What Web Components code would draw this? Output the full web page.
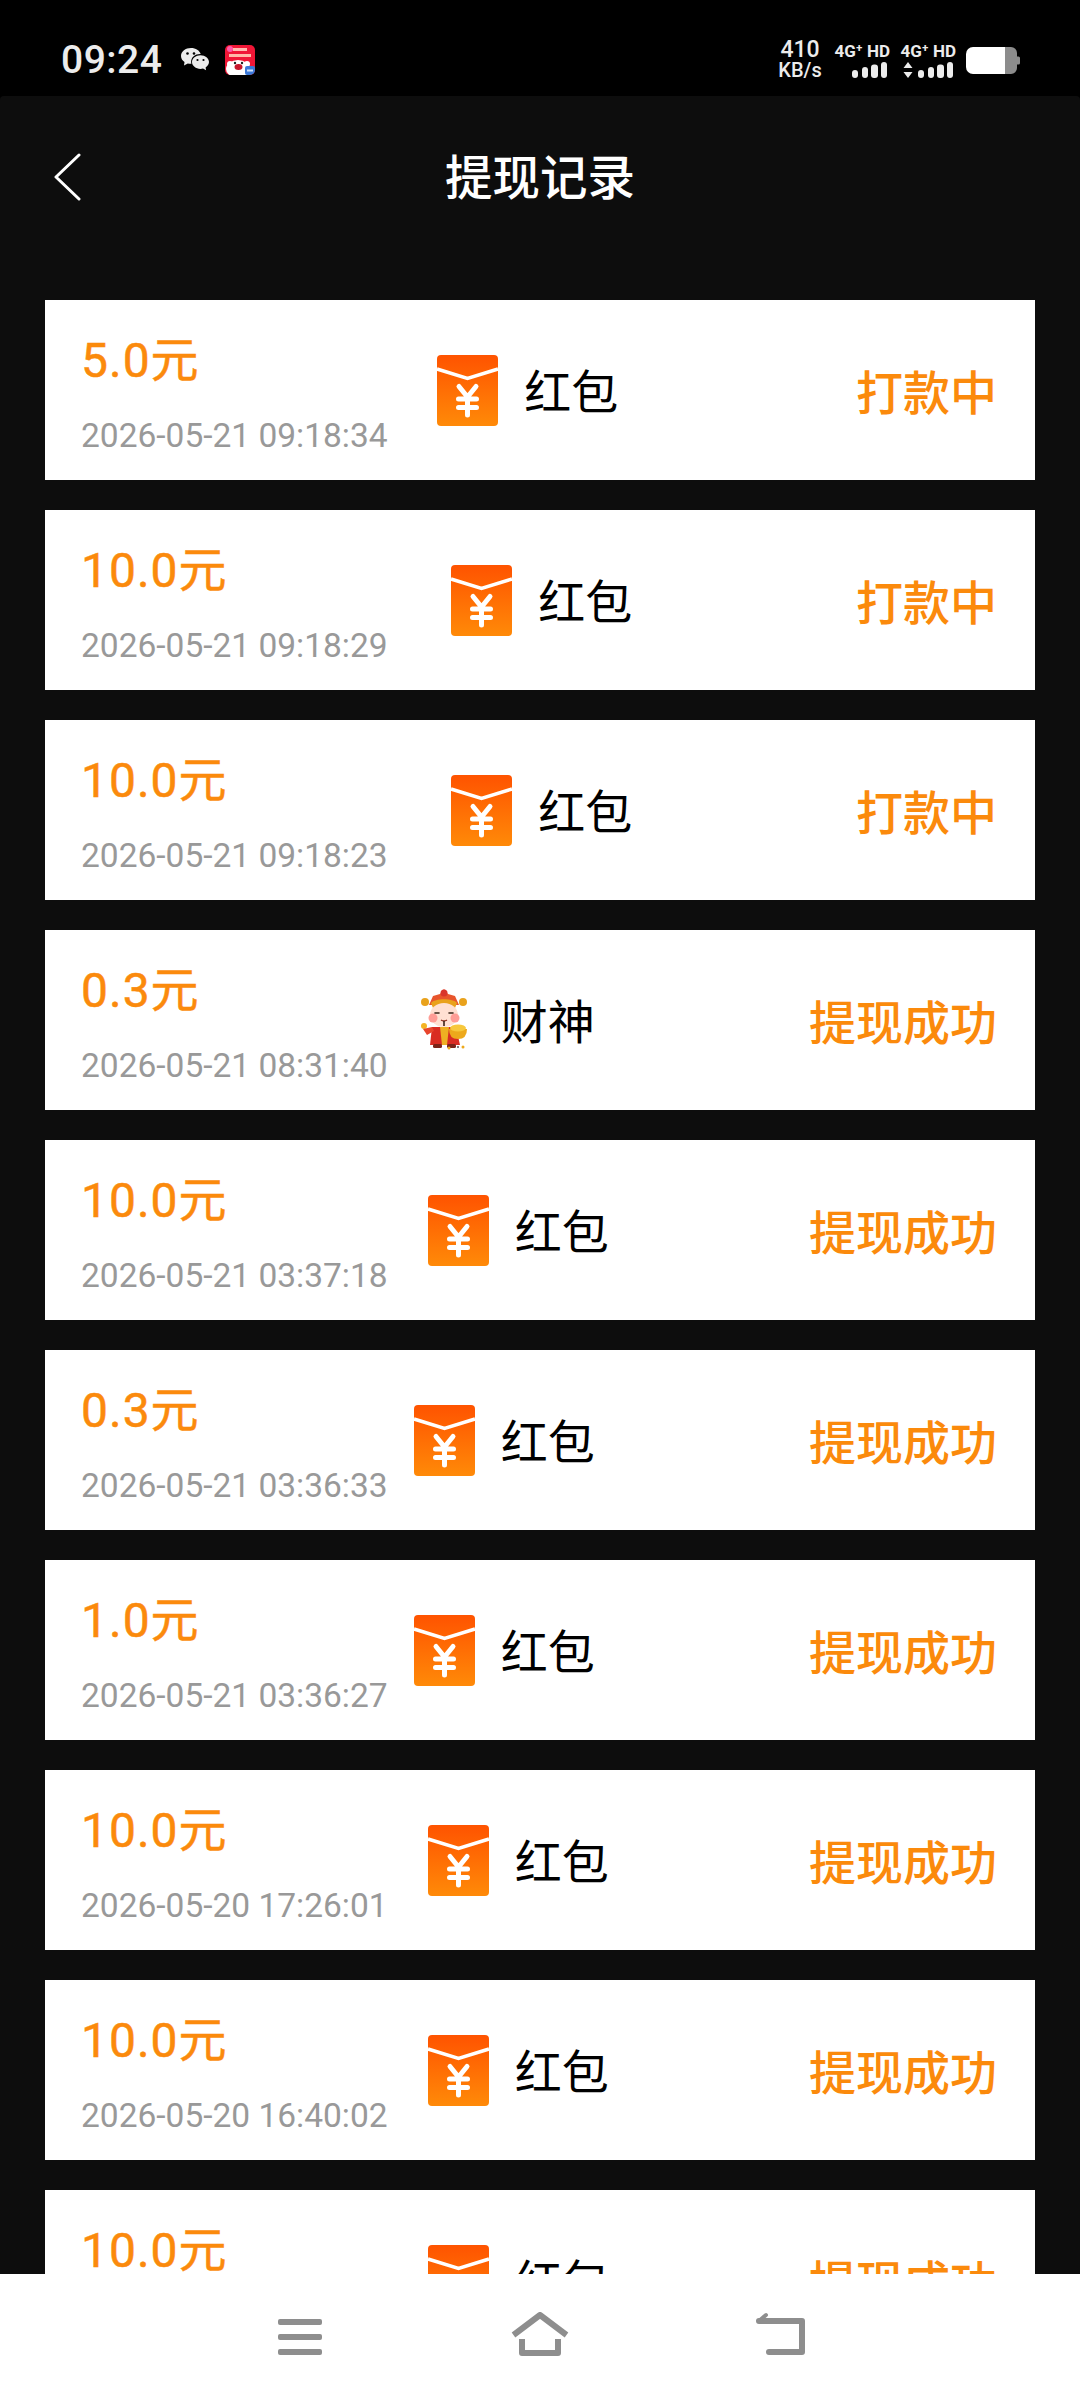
<!DOCTYPE html>
<html lang="zh">
<head>
<meta charset="utf-8">
<title>提现记录</title>
<style>
  html, body { margin: 0; padding: 0; background: #000; }
  body { width: 1080px; height: 2400px; overflow: hidden; font-family: Roboto, "Noto Sans CJK SC", sans-serif; }
</style>
</head>
<body>
<withdraw-page>
  <withdraw-record amount="5.0元" date="2026-05-21 09:18:34" status="打款中">红包</withdraw-record>
  <withdraw-record amount="10.0元" date="2026-05-21 09:18:29" status="打款中">红包</withdraw-record>
  <withdraw-record amount="10.0元" date="2026-05-21 09:18:23" status="打款中">红包</withdraw-record>
  <withdraw-record amount="0.3元" date="2026-05-21 08:31:40" status="提现成功" icon="god">财神</withdraw-record>
  <withdraw-record amount="10.0元" date="2026-05-21 03:37:18" status="提现成功">红包</withdraw-record>
  <withdraw-record amount="0.3元" date="2026-05-21 03:36:33" status="提现成功">红包</withdraw-record>
  <withdraw-record amount="1.0元" date="2026-05-21 03:36:27" status="提现成功">红包</withdraw-record>
  <withdraw-record amount="10.0元" date="2026-05-20 17:26:01" status="提现成功">红包</withdraw-record>
  <withdraw-record amount="10.0元" date="2026-05-20 16:40:02" status="提现成功">红包</withdraw-record>
  <withdraw-record amount="10.0元" date="2026-05-20 16:39:55" status="提现成功">红包</withdraw-record>
</withdraw-page>

<script>
class StatusBar extends HTMLElement {
  constructor() {
    super();
    this.shadowDOM = this.attachShadow({ mode: "open" });
    const bars = `
      <rect x="0" y="8" width="6" height="8" rx="3"/>
      <rect x="10" y="5" width="6" height="11" rx="3"/>
      <rect x="19" y="2.5" width="7" height="13.5" rx="3"/>
      <rect x="29" y="0" width="6" height="16" rx="3"/>`;
    this.shadowDOM.innerHTML = `
    <style>
      :host {
        display: flex;
        align-items: center;
        justify-content: space-between;
        height: 96px;
        padding: 24px 60px 0 61px;
        box-sizing: border-box;
        background: #000;
        color: #ececec;
      }
      .left, .right { display: flex; align-items: center; }
      .time { font: 500 39px/44px Roboto, sans-serif; letter-spacing: 0.5px; margin-right: 19px; }
      .wechat { margin-right: 16px; }
      .speed {
        width: 46px;
        margin-right: 11px;
        font: 500 20px/20px Roboto, sans-serif;
        text-align: center;
        white-space: pre-line;
      }
      .speed::first-line { font-size: 23px; }
      .net {
        display: flex;
        flex-direction: column;
        align-items: flex-end;
        width: 56px;
        margin-right: 10px;
        font: 700 17px/16px Roboto, sans-serif;
        white-space: nowrap;
      }
      .net svg { display: block; margin-top: 3px; }
      .net .row { display: flex; align-items: flex-end; gap: 5px; margin-right: 3px; }
    </style>
    <div class="left">
      <span class="time">09:24</span>
      <svg class="wechat" width="28" height="24" viewBox="0 0 28 24">
        <path fill="#ececec" d="M10 0C4.5 0 0 3.5 0 8c0 2.5 1.4 4.6 3.5 6L3 17.5 6.8 15.4c1 .3 2 .4 3 .4h.6a7.5 7.5 0 0 1-.3-2c0-4.3 4-7.7 9-7.7h.6C18.700 2.500 14.700 0 10 0Z"/>
        <path fill="#ececec" d="M19.500 7.300c-4.700 0-8.500 3-8.500 6.800s3.800 6.800 8.500 6.800c.9 0 1.700-.1 2.500-.3l3.100 1.700-.5-2.900c2-1.300 3.400-3.200 3.400-5.300 0-3.800-3.800-6.800-8.500-6.800Z"/>
        <circle cx="6.500" cy="5.500" r="1.300" fill="#000"/><circle cx="13" cy="5.500" r="1.300" fill="#000"/>
        <circle cx="16.500" cy="12" r="1.100" fill="#000"/><circle cx="22.500" cy="12" r="1.100" fill="#000"/>
      </svg>
      <svg width="30" height="30" viewBox="0 0 30 30">
        <defs><clipPath id="round"><rect width="30" height="30" rx="5"/></clipPath></defs>
        <g clip-path="url(#round)">
          <rect width="30" height="30" fill="#f01636"/>
          <circle cx="5" cy="4" r="3" fill="#ff5aa8"/>
          <rect x="8" y="3" width="14" height="3" fill="#ffb9b0"/>
          <rect x="4" y="9" width="22" height="3" fill="#ffb9a8"/>
          <ellipse cx="13" cy="24" rx="12" ry="9" fill="#fff"/>
          <circle cx="5" cy="19" r="3" fill="#fff"/>
          <circle cx="22" cy="19" r="3" fill="#fff"/>
          <circle cx="10" cy="18" r="1.200" fill="#222"/>
          <circle cx="17" cy="18" r="1.200" fill="#222"/>
          <ellipse cx="13.500" cy="22" rx="4" ry="3" fill="#c8162c"/>
          <rect x="20" y="21" width="10" height="9" rx="2" fill="#3b79d8"/>
          <rect x="22" y="24.500" width="6" height="2" fill="#cfe0fa"/>
        </g>
      </svg>
    </div>
    <div class="right">
      <div class="speed">410
KB/s</div>
      <div class="net">
        <span>4G⁺ HD</span>
        <div class="row"><svg width="35" height="16" viewBox="0 0 35 16" fill="#ececec">${bars}</svg></div>
      </div>
      <div class="net">
        <span>4G⁺ HD</span>
        <div class="row">
          <svg width="10" height="16" viewBox="0 0 10 16" fill="#ececec"><path d="M5 0l4.500 6H.5zM5 16L.5 10h9z"/></svg>
          <svg width="35" height="16" viewBox="0 0 35 16" fill="#ececec">${bars}</svg>
        </div>
      </div>
      <svg width="54" height="27" viewBox="0 0 54 27">
        <path fill="#8c8c8c" d="M38 0h7a6 6 0 0 1 6 6v3.500h1.500a1.500 1.500 0 0 1 1.500 1.500v5a1.500 1.500 0 0 1-1.500 1.500H51V21a6 6 0 0 1-6 6h-7z"/>
        <path fill="#fff" d="M7 0h32v27H7a7 7 0 0 1-7-7V7a7 7 0 0 1 7-7z"/>
      </svg>
    </div>
    `;
  }
}

class TitleBar extends HTMLElement {
  constructor() {
    super();
    this.shadowDOM = this.attachShadow({ mode: "open" });
    this.shadowDOM.innerHTML = `
    <style>
      :host {
        display: grid;
        grid-template-columns: 200px 1fr 200px;
        align-items: center;
        height: 164px;
        flex: none;
        padding-left: 54px;
        box-sizing: border-box;
      }
      .back { display: block; margin-top: -2px; }
      h1 {
        margin: -6px 0 0 -54px;
        text-align: center;
        color: #fff;
        font: 500 47.500px/60px "Noto Sans CJK SC", sans-serif;
      }
    </style>
    <svg class="back" width="27" height="48" viewBox="0 0 27 48">
      <path d="M25 2 2 24l23 22" fill="none" stroke="#fff" stroke-width="3" stroke-linecap="round" stroke-linejoin="round"/>
    </svg>
    <h1><slot></slot></h1>
    `;
  }
}

class RecordIcon extends HTMLElement {
  static get observedAttributes() {
    return ["kind"];
  }

  constructor() {
    super();
    this.shadowDOM = this.attachShadow({ mode: "open" });
  }

  connectedCallback() {
    this.render();
  }

  attributeChangedCallback() {
    this.render();
  }

  render() {
    const art = this.getAttribute("kind") === "god" ? this.godIcon() : this.packetIcon();
    this.shadowDOM.innerHTML = `
    <style>
      :host { display: block; width: 61px; height: 71px; flex: none; }
      svg { display: block; overflow: visible; }
    </style>
    ${art}
    `;
  }

  packetIcon() {
    return `
    <svg width="61" height="71" viewBox="0 0 61 71">
      <defs>
        <linearGradient id="pack" x1="0" y1="0" x2="0" y2="1">
          <stop offset="0" stop-color="#ff5300"/>
          <stop offset="1" stop-color="#ff8a08"/>
        </linearGradient>
      </defs>
      <rect width="61" height="71" rx="4" fill="url(#pack)"/>
      <path d="M0 14 30.500 23.500 61 14" fill="none" stroke="#fff" stroke-width="3.500"/>
      <path d="M22 31.500 30.500 42 39 31.500M21.500 44h18M21.500 52.500h18M30.500 42v18" fill="none" stroke="#fff" stroke-width="5" stroke-linecap="round" stroke-linejoin="round"/>
    </svg>`;
  }

  godIcon() {
    return `
    <svg width="61" height="71" viewBox="0 0 61 71">
      <g transform="translate(7 4)">
        <ellipse cx="4" cy="13" rx="4" ry="4" fill="#e9a21c"/>
        <ellipse cx="42" cy="13" rx="4" ry="4" fill="#e9a21c"/>
        <path d="M8 16 12 7 19 5 23 0 27 5 34 7 38 16Z" fill="#e8552c"/>
        <path d="M10 14C14 9 32 9 36 14L34 19H12Z" fill="#e9a21c"/>
        <circle cx="23" cy="4" r="3.500" fill="#d9362c"/>
        <ellipse cx="23" cy="26" rx="14" ry="12" fill="#ffe0d2"/>
        <circle cx="12" cy="29" r="4.500" fill="#ff9d96"/>
        <circle cx="34" cy="29" r="4.500" fill="#ff9d96"/>
        <path d="M14 24h4M28 24h4" stroke="#3a2418" stroke-width="1.600" stroke-linecap="round"/>
        <path d="M20 31q3 2 6 0" stroke="#8a2c1c" stroke-width="1.400" fill="none"/>
        <path d="M23 32v5" stroke="#3a2418" stroke-width="1.600"/>
        <path d="M11 38 35 38 39 56H9Z" fill="#d92c22"/>
        <path d="M19 38h9l-2 18h-5Z" fill="#eeb022"/>
        <circle cx="3" cy="37" r="3" fill="#f4b424"/>
        <path d="M2 40 6 46 13 42 11 38Z" fill="#e8452c"/>
        <path d="M28 40h18q0 10-9 10t-9-10Z" fill="#eda91c"/>
        <ellipse cx="37" cy="39" rx="8" ry="3.500" fill="#f7c83c"/>
        <rect x="12" y="55" width="9" height="4" rx="1.500" fill="#7a2418"/>
        <rect x="26" y="55" width="9" height="4" rx="1.500" fill="#7a2418"/>
        <circle cx="28" cy="59" r="1.500" fill="#eda91c"/>
        <circle cx="37" cy="58" r="1" fill="#555"/>
        <circle cx="42" cy="58" r="1.500" fill="#eda91c"/>
      </g>
    </svg>`;
  }
}

class WithdrawRecord extends HTMLElement {
  constructor() {
    super();
    this.shadowDOM = this.attachShadow({ mode: "open" });
  }

  connectedCallback() {
    const icon = this.getAttribute("icon") || "packet";
    this.shadowDOM.innerHTML = `
    <style>
      :host {
        display: flex;
        flex: none;
        align-items: center;
        justify-content: space-between;
        height: 180px;
        padding: 0 38px 0 36px;
        box-sizing: border-box;
        background: #fff;
        font-family: Roboto, "Noto Sans CJK SC", sans-serif;
      }
      .money { display: flex; flex-direction: column; margin-top: 9px; }
      .amount {
        color: #fb8a0c;
        font-size: 48px;
        line-height: 56px;
        letter-spacing: 1px;
        white-space: nowrap;
        margin-top: -2px;
        -webkit-text-stroke: 0.5px #fb8a0c;
      }
      /* date may run past the amount without pushing the middle column */
      .date {
        width: 0;
        margin-top: 28px;
        color: #999;
        font-size: 33.500px;
        line-height: 38px;
        white-space: nowrap;
      }
      .kind {
        display: flex;
        align-items: center;
        gap: 26px;
        color: #000;
        font-size: 47px;
      }
      .label { margin-top: -3px; }
      .status {
        margin-top: -2px;
        color: #fb8a0c;
        font-size: 47px;
        font-weight: 500;
        white-space: nowrap;
      }
    </style>
    <div class="money">
      <span class="amount">${this.getAttribute("amount")}</span>
      <span class="date">${this.getAttribute("date")}</span>
    </div>
    <div class="kind">
      <record-icon kind="${icon}"></record-icon>
      <span class="label"><slot></slot></span>
    </div>
    <span class="status">${this.getAttribute("status")}</span>
    `;
  }
}

class NavBar extends HTMLElement {
  constructor() {
    super();
    this.shadowDOM = this.attachShadow({ mode: "open" });
    this.shadowDOM.innerHTML = `
    <style>
      :host {
        display: grid;
        grid-template-columns: repeat(3, 240px);
        justify-content: center;
        justify-items: center;
        align-items: start;
        height: 126px;
        flex: none;
        padding-top: 38px;
        box-sizing: border-box;
        background: #fff;
      }
      svg { display: block; }
    </style>
    <svg width="60" height="44" viewBox="0 0 60 44" fill="#8e8e8e">
      <rect x="8" y="7" width="44" height="6" rx="2"/>
      <rect x="8" y="22" width="44" height="6" rx="2"/>
      <rect x="8" y="37" width="44" height="6" rx="2"/>
    </svg>
    <svg width="60" height="44" viewBox="0 0 60 44" fill="none" stroke="#8e8e8e" stroke-width="6" stroke-linecap="round" stroke-linejoin="round">
      <path d="M3.500 23 30 3l26.500 20" stroke-linecap="butt"/>
      <path d="M12 27v14h36V27" stroke-linecap="butt"/>
    </svg>
    <svg width="60" height="44" viewBox="0 0 60 44" fill="none" stroke="#8e8e8e" stroke-width="6" stroke-linecap="round" stroke-linejoin="round">
      <path d="M9 9h43v31H19"/>
      <path d="M9 9l7-6" stroke-width="4"/>
    </svg>
    `;
  }
}

class WithdrawPage extends HTMLElement {
  constructor() {
    super();
    this.shadowDOM = this.attachShadow({ mode: "open" });
    this.shadowDOM.innerHTML = `
    <style>
      :host {
        display: flex;
        flex-direction: column;
        width: 1080px;
        height: 2400px;
        background: #000;
        overflow: hidden;
      }
      .content {
        display: flex;
        flex-direction: column;
        flex: 1;
        min-height: 0;
        background: #0d0d0d;
        border-radius: 4px 4px 0 0;
      }
      .list {
        display: flex;
        flex-direction: column;
        flex: 1;
        min-height: 0;
        gap: 30px;
        padding: 40px 45px 0;
        overflow: hidden;
      }
    </style>
    <status-bar></status-bar>
    <div class="content">
      <title-bar>提现记录</title-bar>
      <div class="list"><slot></slot></div>
    </div>
    <nav-bar></nav-bar>
    `;
  }
}

customElements.define("status-bar", StatusBar);
customElements.define("title-bar", TitleBar);
customElements.define("record-icon", RecordIcon);
customElements.define("withdraw-record", WithdrawRecord);
customElements.define("nav-bar", NavBar);
customElements.define("withdraw-page", WithdrawPage);
</script>
</body>
</html>
